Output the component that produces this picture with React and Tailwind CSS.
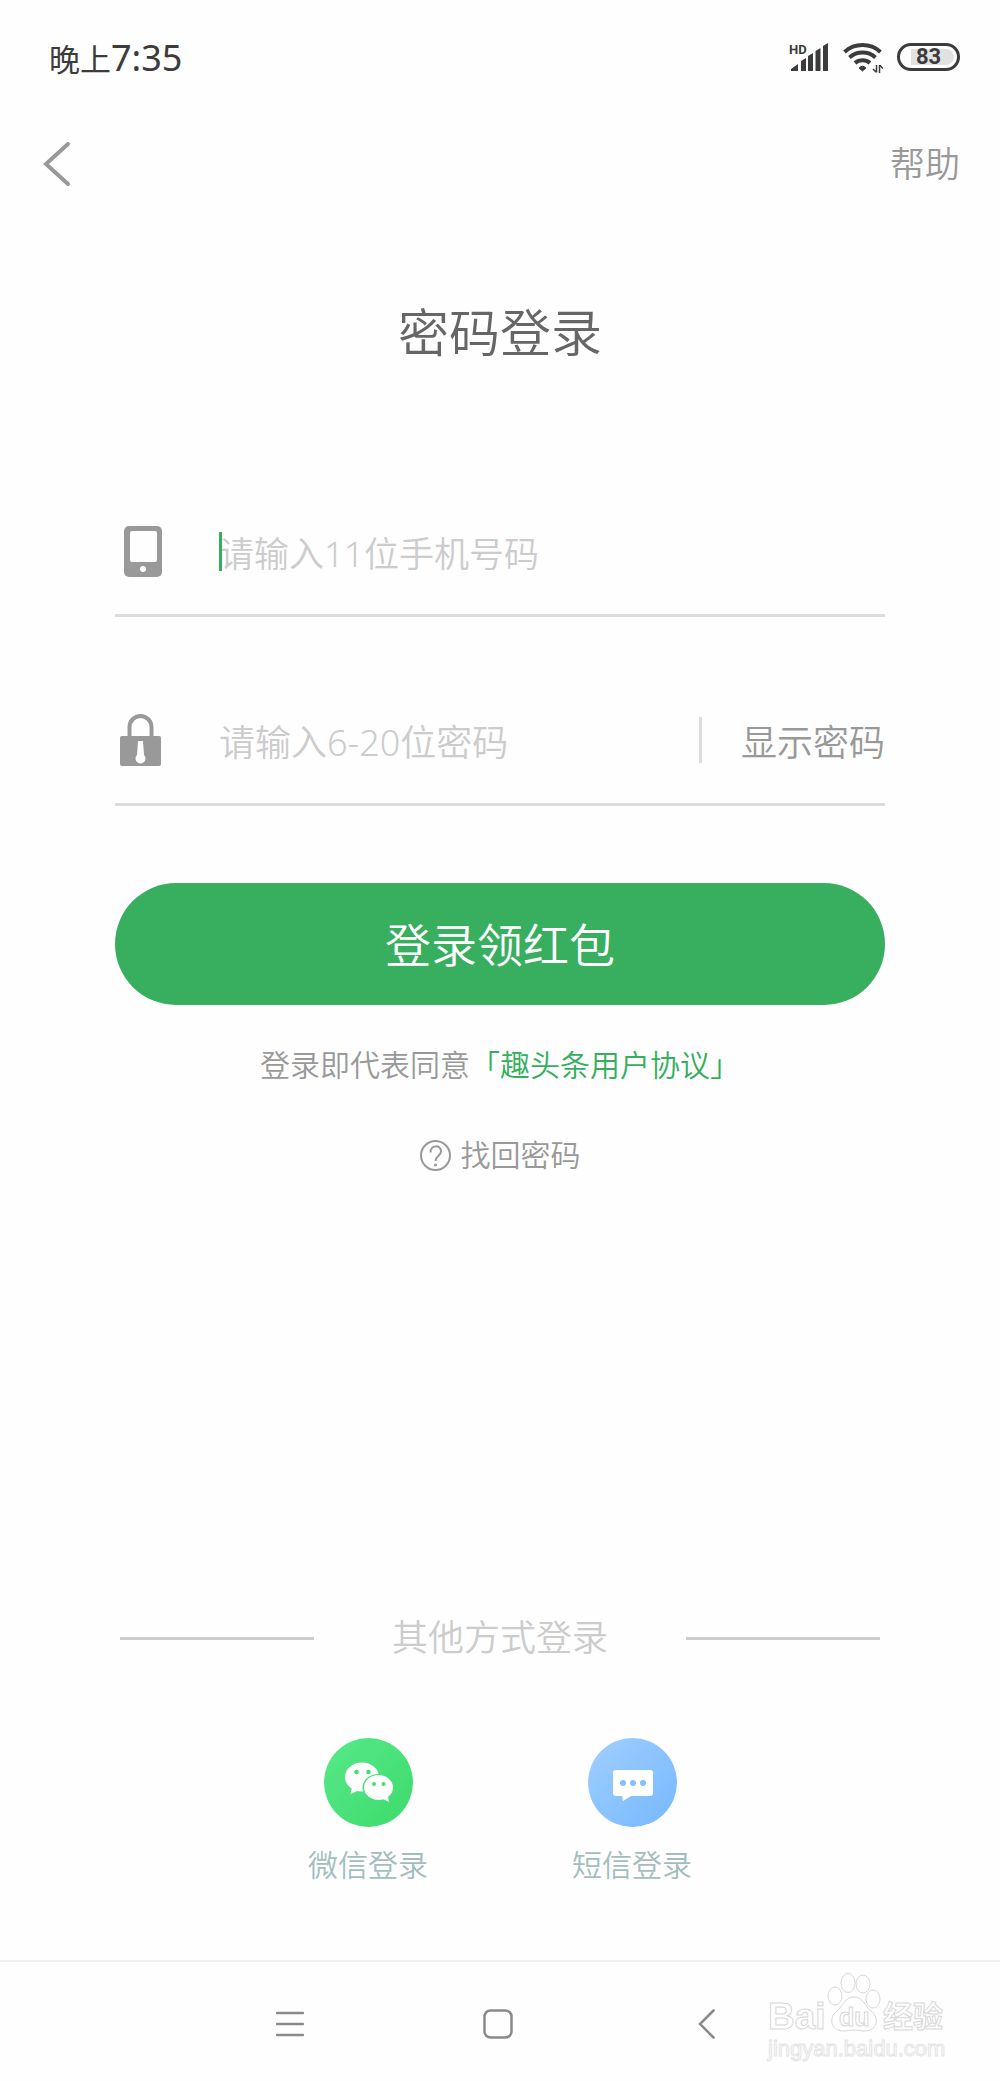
import React from "react";

const StatusIcons = () => (
    <div className="flex items-center gap-[14px] pb-1 text-[#3c3c3c]">
        <svg width="40" height="32" viewBox="0 0 40 32" fill="currentColor">
            <text x="0" y="13" fontSize="13" fontWeight="700" fontFamily="Roboto, sans-serif">
                HD
            </text>
            <path d="M2 30v-2l7-5v7z" />
            <path d="M12 30V20l5-3v13z" />
            <path d="M19 30V15l5-3v18z" />
            <path d="M26.500 30V10l5-3v23z" />
            <path d="M34 30V5l5-3v28z" />
        </svg>
        <svg width="40" height="32" viewBox="0 0 40 32" fill="none" stroke="currentColor">
            <path d="M1.500 11a27 27 0 0 1 36 0" strokeWidth="4" />
            <path d="M6.500 16.500a19.500 19.500 0 0 1 26 0" strokeWidth="4" />
            <path d="M12 22a11.500 11.500 0 0 1 15 0" strokeWidth="4" />
            <path
                d="M19.500 30l-3.500-3q3.500-3.500 7 0z"
                fill="currentColor"
                strokeWidth="1"
                strokeLinejoin="round"
            />
            <path d="M33.500 24v7.500M33 31l-3-3M36.500 32v-8M37 24.500l3 3" strokeWidth="1.500" />
        </svg>
        <div className="relative flex h-[28px] w-[63px] items-center justify-center rounded-full border-[3px] border-[#3c3c3c] text-[22px] font-bold">
            <div className="absolute inset-y-[3px] right-[3px] w-[43px] rounded-r-full bg-[#e2e2e2]" />
            <span className="relative font-['Roboto',sans-serif]">83</span>
        </div>
    </div>
);

const PhoneIcon = () => (
    <svg width="42" height="52" viewBox="0 0 42 52">
        <rect x="4" y="1" width="38" height="51" rx="5" fill="#999" />
        <rect x="10" y="6" width="27" height="31" rx="2" fill="#fefefe" />
        <circle cx="23" cy="44" r="3" fill="#fefefe" />
    </svg>
);

const LockIcon = () => (
    <svg width="42" height="52" viewBox="0 0 42 52">
        <path d="M9.500 24V13a11 11 0 0 1 22 0v11" fill="none" stroke="#999" strokeWidth="4" />
        <rect x="0" y="22" width="41" height="30" rx="2" fill="#999" />
        <path d="M18 27h5l1 14a5 5 0 1 1-7 0z" fill="#fefefe" />
    </svg>
);

const WechatIcon = () => (
    <svg width="89" height="89" viewBox="0 0 89 89">
        <defs>
            <linearGradient id="wechat" x1="0" y1="0" x2="1" y2="1">
                <stop offset="0" stopColor="#58e889" />
                <stop offset="1" stopColor="#3cdb6b" />
            </linearGradient>
        </defs>
        <circle cx="44.500" cy="44.500" r="44.500" fill="url(#wechat)" />
        <ellipse cx="38" cy="39" rx="17" ry="14.500" fill="#fff" />
        <path d="M28 49l-1.500 7 9-4z" fill="#fff" />
        <ellipse cx="54.500" cy="49.500" rx="16" ry="13.500" fill="#48e07a" />
        <ellipse cx="54.500" cy="49.500" rx="14.500" ry="12.500" fill="#fff" />
        <path d="M57 60l8 4-1.500-7z" fill="#fff" />
        <circle cx="32.500" cy="34" r="2.300" fill="#45dd76" />
        <circle cx="44.500" cy="34" r="2.300" fill="#45dd76" />
        <circle cx="50" cy="46" r="2" fill="#45dd76" />
        <circle cx="59.500" cy="46" r="2" fill="#45dd76" />
    </svg>
);

const SmsIcon = () => (
    <svg width="89" height="89" viewBox="0 0 89 89">
        <defs>
            <linearGradient id="sms" x1="0" y1="0" x2="1" y2="1">
                <stop offset="0" stopColor="#a0cfff" />
                <stop offset="1" stopColor="#76b8ff" />
            </linearGradient>
        </defs>
        <circle cx="44.500" cy="44.500" r="44.500" fill="url(#sms)" />
        <path
            d="M28 32h34a3 3 0 0 1 3 3v20a3 3 0 0 1-3 3H43l-8 5-1-5h-6a3 3 0 0 1-3-3V35a3 3 0 0 1 3-3z"
            fill="#fff"
        />
        <circle cx="35" cy="45" r="3" fill="#84bfff" />
        <circle cx="45" cy="45" r="3" fill="#84bfff" />
        <circle cx="55" cy="45" r="3" fill="#84bfff" />
    </svg>
);

const Watermark = () => (
    <svg
        className="pointer-events-none absolute right-[50px] bottom-[18px]"
        width="184"
        height="92"
        viewBox="0 0 184 92"
        fill="#fff"
        stroke="#d8d8d8"
        strokeWidth="1"
    >
        <ellipse cx="69" cy="25" rx="7" ry="9" />
        <ellipse cx="82" cy="12" rx="7" ry="9.500" />
        <ellipse cx="97" cy="13" rx="7" ry="9" />
        <ellipse cx="107" cy="28" rx="7" ry="9" />
        <path d="M88 26c9 0 11 9 17 14 9 7 6 20-6 20-5 0-7-1-11-1s-6 1-11 1c-12 0-15-13-6-20 6-5 8-14 17-14z" />
        <text x="2" y="58" fontSize="37" fontWeight="700" fontFamily="Liberation Sans, sans-serif">
            Bai
        </text>
        <text x="73" y="55" fontSize="25" fontWeight="700" fontFamily="Liberation Sans, sans-serif">
            du
        </text>
        <text x="117" y="56" fontSize="30" fontWeight="700" fontFamily="Noto Sans CJK SC, sans-serif">
            经验
        </text>
        <text x="2" y="85" fontSize="22" fontFamily="Liberation Sans, sans-serif" stroke="#e4e4e4">
            jingyan.baidu.com
        </text>
    </svg>
);

const socials = [
    { name: "微信登录", Icon: WechatIcon },
    { name: "短信登录", Icon: SmsIcon },
];

const App = () => (
    <div className="relative flex min-h-screen flex-col bg-[#fefefe] font-['Noto_Sans','Noto_Sans_CJK_SC',sans-serif] font-[350]">
        <div className="flex items-center justify-between pt-9 pr-10 pl-[49px]">
            <p className="text-[31px] leading-[44px] font-normal text-[#3c3c3c]">
                晚上<span className="text-[36px]">7:35</span>
            </p>
            <StatusIcons />
        </div>

        <header className="mt-[55px] flex h-14 items-center justify-between pr-10 pl-[43px]">
            <button type="button" aria-label="返回">
                <svg width="27" height="44" viewBox="0 0 27 44" fill="none" stroke="#999" strokeWidth="4">
                    <path d="M25 2L3 22l22 20" strokeLinecap="round" />
                </svg>
            </button>
            <a href="#help" className="text-[35px] text-[#999]">
                帮助
            </a>
        </header>

        <main className="flex flex-1 flex-col items-center">
            <h1 className="mt-[110px] text-[51px] leading-[60px] text-[#666]">密码登录</h1>

            <form className="mt-[126px] flex w-[77%] flex-col" onSubmit={(e) => e.preventDefault()}>
                <div className="flex h-[129px] items-center border-b-[3px] border-[#dcdcdc]">
                    <label htmlFor="phone" aria-label="手机号码" className="w-[104px] pl-[5px]">
                        <PhoneIcon />
                    </label>
                    <div className="relative flex flex-1 items-center">
                        <input
                            id="phone"
                            type="tel"
                            placeholder="请输入11位手机号码"
                            className="w-full pt-[6px] text-[35px] leading-[50px] outline-none placeholder:text-[#ccc]"
                        />
                        <span className="absolute left-0 h-[39px] w-[3px] bg-[#35af5d]" />
                    </div>
                </div>

                <div className="mt-15 flex h-[129px] items-center border-b-[3px] border-[#dcdcdc]">
                    <label htmlFor="password" aria-label="密码" className="w-[104px] pl-[5px]">
                        <LockIcon />
                    </label>
                    <input
                        id="password"
                        type="password"
                        placeholder="请输入6-20位密码"
                        className="min-w-0 flex-1 pt-[6px] text-[36px] leading-[50px] outline-none placeholder:text-[#ccc]"
                    />
                    <button
                        type="button"
                        className="flex items-center gap-[39px] text-[36px] leading-[50px] text-[#999]"
                    >
                        <span className="h-[46px] w-[3px] bg-[#dcdcdc]" />
                        <span className="pt-[6px]">显示密码</span>
                    </button>
                </div>

                <button
                    type="submit"
                    className="mt-[77px] h-[122px] rounded-full bg-[#38af5f] text-[46px] text-white"
                >
                    登录领红包
                </button>
            </form>

            <p className="mt-10 text-[30px] leading-10 text-[#999]">
                登录即代表同意
                <a href="#agreement" className="text-[#35af5d]">
                    「趣头条用户协议」
                </a>
            </p>

            <a href="#reset" className="mt-[50px] flex items-center gap-[10px] text-[30px] leading-10 text-[#999]">
                <svg width="31" height="31" viewBox="0 0 31 31" fill="none" stroke="#999" strokeWidth="2">
                    <circle cx="15.500" cy="15.500" r="14.500" />
                    <path d="M10.500 12.500c0-8 10.500-8 10.500-1 0 4-5.500 4.500-5.500 9.500" />
                    <circle cx="15.500" cy="25" r="1.500" fill="#999" stroke="none" />
                </svg>
                找回密码
            </a>

            <div className="mt-auto flex w-[76%] items-center gap-[78px] text-[36px] leading-[50px] text-[#ccc]">
                <span className="h-[3px] flex-1 bg-[#ccc]" />
                其他方式登录
                <span className="h-[3px] flex-1 bg-[#ccc]" />
            </div>

            <div className="mt-[75px] mb-[75px] flex gap-[142px]">
                {socials.map(({ name, Icon }) => (
                    <button
                        key={name}
                        type="button"
                        className="flex w-[122px] flex-col items-center gap-[18px] text-[30px] leading-10 whitespace-nowrap text-[#a3bdbf]"
                    >
                        <Icon />
                        {name}
                    </button>
                ))}
            </div>
        </main>

        <nav className="flex h-[121px] items-center justify-between border-t-2 border-[#f0f0f0] pt-1 pr-[273px] pl-[269px] text-[#8a8a8a]">
            <button type="button" aria-label="菜单" className="flex w-[42px] justify-center">
                <svg width="28" height="30" viewBox="0 0 28 30" stroke="currentColor" strokeWidth="2.500">
                    <path d="M1 4h26M1 15h26M1 26h26" strokeLinecap="round" />
                </svg>
            </button>
            <button type="button" aria-label="主页" className="flex w-[42px] justify-center">
                <svg width="30" height="30" viewBox="0 0 30 30" fill="none" stroke="currentColor" strokeWidth="2.500">
                    <rect x="1.500" y="1.500" width="27" height="27" rx="6" />
                </svg>
            </button>
            <button type="button" aria-label="后退" className="flex w-[42px] justify-center">
                <svg width="17" height="30" viewBox="0 0 17 30" fill="none" stroke="currentColor" strokeWidth="2.500">
                    <path d="M15.500 1.500L2 15l13.500 13.500" strokeLinecap="round" />
                </svg>
            </button>
        </nav>

        <Watermark />
    </div>
);

export default App;
